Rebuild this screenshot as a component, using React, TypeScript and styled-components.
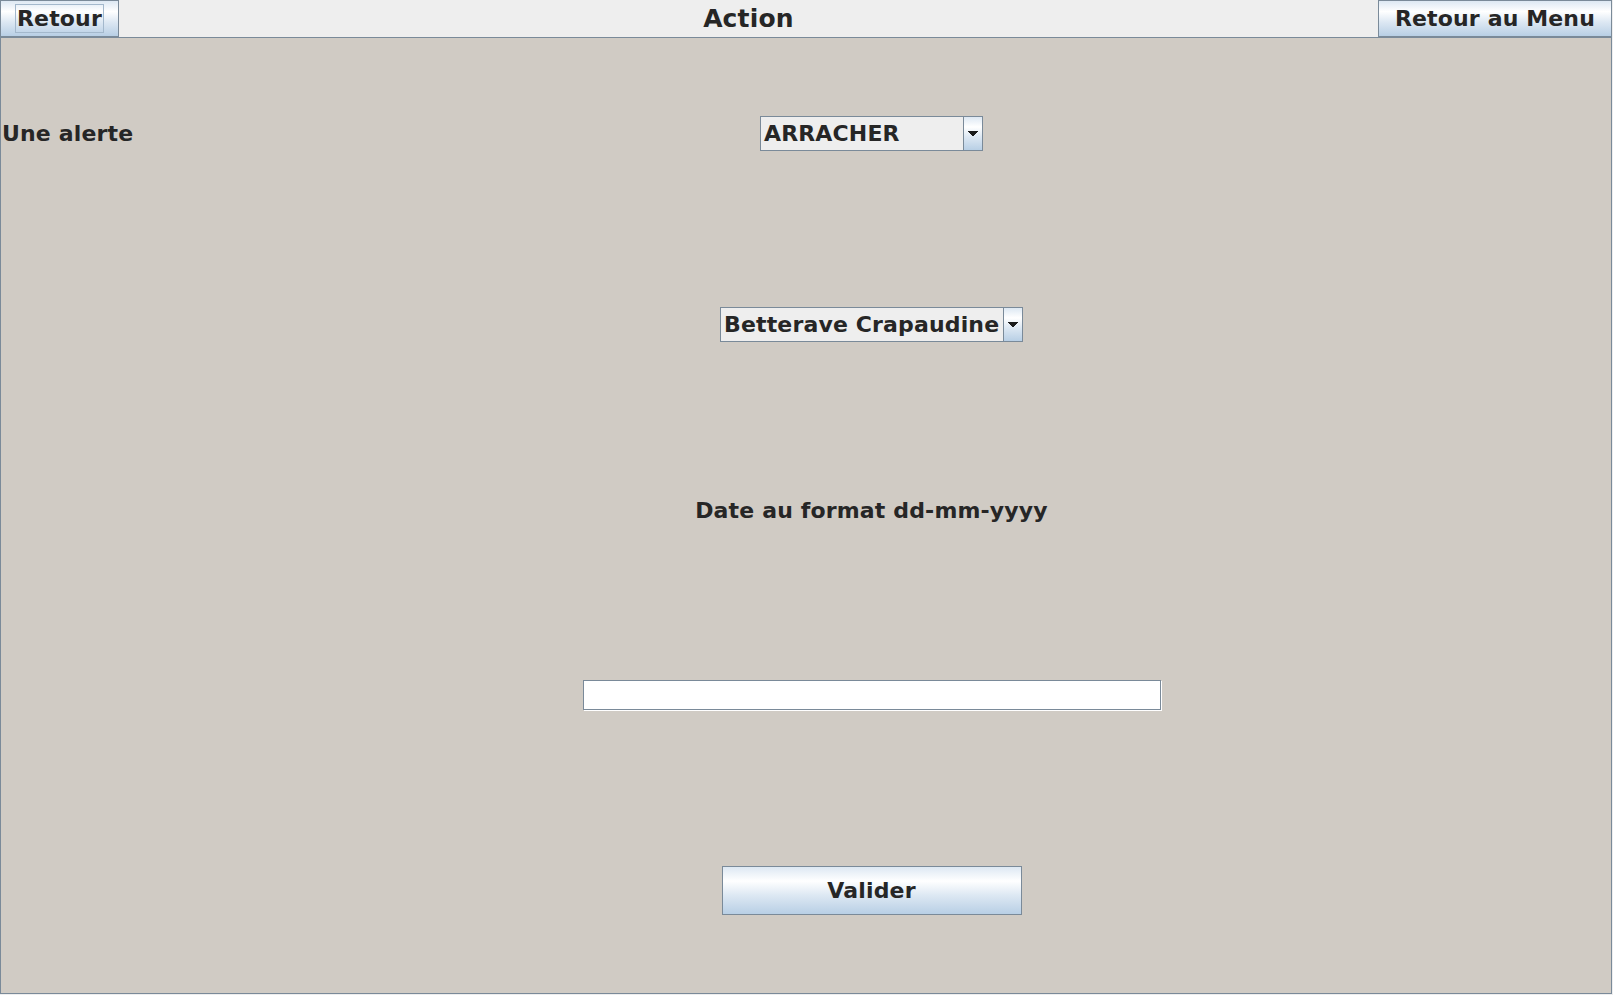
import React from "react";
import styled, { createGlobalStyle } from "styled-components";

const GlobalStyle = createGlobalStyle`
  html, body {
    margin: 0;
    padding: 0;
    background: #eeeeee;
  }
`;

const oceanGradient =
  "linear-gradient(to bottom, #dde8f3 0%, #ffffff 30%, #dde8f3 60%, #b8cfe5 100%)";

// Metal combo arrow: stepped rows 10, 8, 6, 4, 2 px wide
const ComboArrow = () => (
  <svg width="10" height="5" viewBox="0 0 10 5" shapeRendering="crispEdges">
    <path
      d="M0 0 H10 V1 H9 V2 H8 V3 H7 V4 H6 V5 H4 V4 H3 V3 H2 V2 H1 V1 H0 Z"
      fill="#1a1a1a"
    />
  </svg>
);

export default function App() {
  return (
    <>
      <GlobalStyle />
      <Frame>
        <TopBar>
          <HeaderButton>
            <FocusRing>Retour</FocusRing>
          </HeaderButton>
          <Title>Action</Title>
          <HeaderButton>Retour au Menu</HeaderButton>
        </TopBar>
        <Panel>
          <RowLabel>Une alerte</RowLabel>
          <Combo width={223}>
            <ComboValue>ARRACHER</ComboValue>
            <ComboButton>
              <ComboArrow />
            </ComboButton>
          </Combo>
          <Combo width={303}>
            <ComboValue>Betterave Crapaudine</ComboValue>
            <ComboButton>
              <ComboArrow />
            </ComboButton>
          </Combo>
          <CenterLabel>Date au format dd-mm-yyyy</CenterLabel>
          <DateField type="text" />
          <SubmitButton>Valider</SubmitButton>
        </Panel>
      </Frame>
    </>
  );
}

const Frame = styled.div`
  width: 1612px;
  height: 994px;
  display: flex;
  flex-direction: column;
  font-family: "DejaVu Sans", "Liberation Sans", sans-serif;
  font-weight: bold;
  letter-spacing: 0.15px;
  color: #262626;
`;

const TopBar = styled.div`
  height: 37px;
  display: flex;
  align-items: stretch;
  background: #eeeeee;
`;

const HeaderButton = styled.button`
  display: flex;
  align-items: center;
  justify-content: center;
  padding: 0 16px;
  border: 1px solid #7a8a99;
  background: ${oceanGradient};
  font-family: inherit;
  font-weight: bold;
  font-size: 22px;
  letter-spacing: inherit;
  color: inherit;
  cursor: pointer;
`;

const FocusRing = styled.span`
  display: inline-block;
  border: 1px solid #a3b8cc;
  line-height: 27px;
  padding: 0 1px;
  margin: 0 -2px;
`;

const Title = styled.div`
  flex: 1;
  display: flex;
  align-items: center;
  justify-content: center;
  font-size: 25px;
`;

const Panel = styled.div`
  flex: 1;
  display: grid;
  grid-template-columns: 131px 1fr;
  grid-template-rows: repeat(5, auto);
  align-content: stretch;
  background: #d0cbc4;
  border: 1px solid #7a8a99;
  font-size: 22px;
`;

const RowLabel = styled.div`
  grid-column: 1;
  grid-row: 1;
  align-self: center;
  padding-left: 1px;
  white-space: nowrap;
`;

const Combo = styled.div<{ width: number }>`
  grid-column: 2;
  justify-self: center;
  align-self: center;
  width: ${(p) => p.width}px;
  height: 35px;
  box-sizing: border-box;
  display: flex;
  border: 1px solid #7a8a99;
  background: #eeeeee;
`;

const ComboValue = styled.div`
  flex: 1;
  display: flex;
  align-items: center;
  padding-left: 3px;
  white-space: nowrap;
  overflow: hidden;
`;

const ComboButton = styled.div`
  width: 18px;
  display: flex;
  align-items: center;
  justify-content: center;
  border-left: 1px solid #7a8a99;
  background: ${oceanGradient};
`;

const CenterLabel = styled.div`
  grid-column: 2;
  justify-self: center;
  align-self: center;
  line-height: 27px;
`;

const DateField = styled.input`
  grid-column: 2;
  justify-self: center;
  align-self: center;
  width: 578px;
  height: 30px;
  box-sizing: border-box;
  margin: 0;
  padding: 0 3px;
  border: 1px solid #7a8a99;
  box-shadow: 1px 1px 0 #ffffff;
  background: #ffffff;
  font-family: inherit;
  font-size: 22px;
  outline: none;
`;

const SubmitButton = styled.button`
  grid-column: 2;
  justify-self: center;
  align-self: center;
  width: 300px;
  height: 49px;
  border: 1px solid #7a8a99;
  background: ${oceanGradient};
  font-family: inherit;
  font-weight: bold;
  font-size: 22px;
  letter-spacing: inherit;
  color: inherit;
  cursor: pointer;
`;
